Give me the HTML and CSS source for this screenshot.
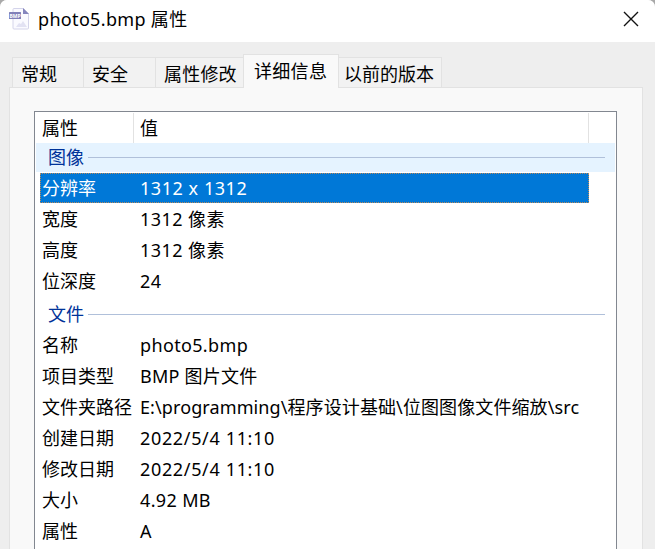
FILE: index.html
```html
<!DOCTYPE html>
<html lang="zh-CN">
<head>
<meta charset="utf-8">
<title>photo5.bmp 属性</title>
<link rel="stylesheet" href="styles.css">
</head>
<body>
<div class="window">
  <header class="titlebar">
    <svg class="file-icon" width="22" height="24" viewBox="0 0 22 24">
      <path d="M5 1.500h9.500l5 5V21a1 1 0 0 1-1 1H5a1 1 0 0 1-1-1V2.500a1 1 0 0 1 1-1z" fill="#fafaff" stroke="#d4d4ea"/>
      <path d="M14 1l6 6h-6z" fill="#8585bd"/>
      <path d="M7 20l3-4 2 1 2-3 4 6z" fill="#e2e2f3"/>
      <rect x="0" y="5" width="12" height="7" rx=".6" fill="#8080b8"/>
      <text class="icon-label" x="6" y="10.500" text-anchor="middle">BMP</text>
    </svg>
    <h1 class="title">photo5.bmp 属性</h1>
    <svg class="close" width="16" height="16" viewBox="0 0 16 16"><path d="M1 1l14 14M15 1L1 15" stroke="#111" stroke-width="1.400" fill="none"/></svg>
  </header>
  <nav class="tabs">
    <div class="tab tab-general">常规</div>
    <div class="tab tab-security">安全</div>
    <div class="tab tab-modify">属性修改</div>
    <div class="tab tab-details active">详细信息</div>
    <div class="tab tab-versions">以前的版本</div>
  </nav>
  <main class="panel">
    <section class="list">
      <div class="head"><div class="head-name">属性</div><div class="head-value">值</div></div>
      <div class="group hot"><span>图像</span></div>
      <div class="rows">
        <div class="row selected"><span>分辨率</span><span class="digits">1312 x 1312</span></div>
        <div class="row"><span>宽度</span><span class="size">1312 像素</span></div>
        <div class="row"><span>高度</span><span class="size">1312 像素</span></div>
        <div class="row"><span>位深度</span><span class="digits">24</span></div>
      </div>
      <div class="group"><span>文件</span></div>
      <div class="rows">
        <div class="row"><span>名称</span><span class="name">photo5.bmp</span></div>
        <div class="row"><span>项目类型</span><span class="type">BMP 图片文件</span></div>
        <div class="row"><span>文件夹路径</span><span class="path">E:\programming\程序设计基础\位图图像文件缩放\src</span></div>
        <div class="row"><span>创建日期</span><span class="date">2022/5/4 11:10</span></div>
        <div class="row"><span>修改日期</span><span class="date">2022/5/4 11:10</span></div>
        <div class="row"><span>大小</span><span class="name">4.92 MB</span></div>
        <div class="row"><span>属性</span><span>A</span></div>
      </div>
    </section>
  </main>
</div>
</body>
</html>
```
FILE: styles.css
```css
* { box-sizing: border-box; }
body {
  margin: 0;
  background: #a9a9a9;
  color: #000;
  font: 400 18px/30px "Noto Sans", "Noto Sans CJK SC", sans-serif;
  overflow: hidden;
}
.window {
  display: flex;
  flex-direction: column;
  height: 549px;
  background: #eee;
  border-radius: 7px 7px 0 0;
  overflow: hidden;
}
.titlebar {
  display: flex;
  align-items: center;
  height: 42px;
  padding: 0 16px 4px 9px;
  background: #fff;
  flex: none;
}
.file-icon { margin-right: 7px; }
.icon-label { font: bold 5px "Noto Sans", sans-serif; fill: #fff; }
.title { flex: 1; margin: 0; font-size: 18px; font-weight: 400; letter-spacing: .33px; }
.tabs {
  display: flex;
  align-items: flex-end;
  height: 45px;
  padding-left: 12px;
  flex: none;
}
.tab {
  height: 30px;
  padding-left: 8px;
  border: 1px solid #e2e2e2;
  border-width: 1px 0 0 1px;
  background: #f2f2f2;
  line-height: 32px;
  white-space: nowrap;
}
.tab-general { width: 71px; }
.tab-security { width: 72px; }
.tab-modify { width: 88px; letter-spacing: .2px; }
.tab-details { width: 96px; padding-left: 10px; letter-spacing: .3px; }
.tab-versions { width: 103px; padding-left: 5px; border-left: 0; border-right-width: 1px; }
.tab.active {
  height: 34px;
  margin-bottom: -1px;
  border-right-width: 1px;
  background: #f9f9f9;
  line-height: 32px;
  z-index: 1;
}
.panel {
  flex: 1;
  margin: 0 12px 0 9px;
  padding: 23px 25px 0 24px;
  border: 1px solid #e2e2e2;
  border-bottom: 0;
  background: #f9f9f9;
}
.list {
  height: 100%;
  border: 1px solid #828790;
  border-bottom: 0;
  background: #fff;
  overflow: hidden;
}
.head { display: flex; height: 31px; padding-top: 1px; line-height: 30px; }
.head-name { width: 99px; padding-left: 7px; border-right: 1px solid #e2e2e2; }
.head-value { width: 455px; padding-left: 6px; border-right: 1px solid #e2e2e2; }
.group {
  display: flex;
  align-items: center;
  height: 29px;
  margin: 0 1px;
  padding: 0 10px 0 12px;
  color: #003399;
  line-height: 28px;
}
.group span { padding-bottom: 2px; }
.group::after { content: ""; flex: 1; height: 1px; margin-left: 4px; background: #b0c0da; }
.group.hot { background: #e5f3ff; }
.rows { padding: 1px 0 3px 5px; }
.row {
  display: grid;
  grid-template-columns: 98px 1fr;
  width: 549px;
  height: 31px;
  padding-left: 2px;
  line-height: 31px;
  white-space: nowrap;
}
.row.selected {
  height: 30px;
  margin-bottom: 1px;
  background: #0078d7;
  color: #fff;
  outline: 1px dotted #b98a5b;
  outline-offset: -1px;
  line-height: 30px;
}
.digits { letter-spacing: .55px; }
.size { letter-spacing: .45px; }
.name { letter-spacing: .35px; }
.type { letter-spacing: .25px; }
.path { letter-spacing: .1px; }
.date { letter-spacing: .65px; }
```
